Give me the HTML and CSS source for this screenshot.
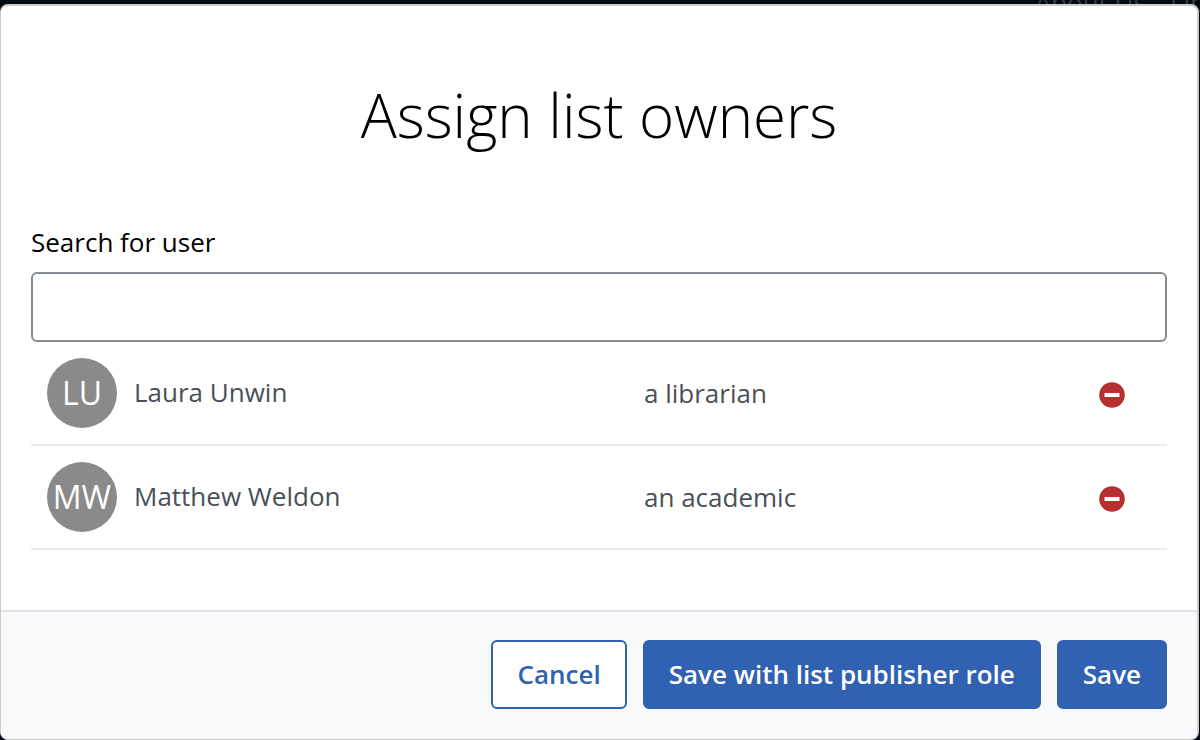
FILE: index.html
```html
<!DOCTYPE html>
<html lang="en">
<head>
  <meta charset="UTF-8" />
  <meta name="viewport" content="width=device-width, initial-scale=1.0"/>
  <title>Assign list owners</title>
  <link rel="stylesheet" href="styles.css">
</head>
<body>
  <nav class="site-nav">
    <a href="#">About Us</a>
    <a href="#">Lib</a>
  </nav>

  <div class="modal" role="dialog" aria-modal="true" aria-labelledby="modalTitle">
    <div class="modal-body">
      <h1 id="modalTitle">Assign list owners</h1>

      <label for="userSearch">Search for user</label>
      <input type="text" id="userSearch" class="search-input" />

      <ul class="owners">
        <li class="owner">
          <span class="avatar">LU</span>
          <span class="name">Laura Unwin</span>
          <span class="role">a librarian</span>
          <button type="button" class="remove" aria-label="Remove Laura Unwin">
            <svg viewBox="0 0 26 26" width="26" height="26" aria-hidden="true">
              <circle cx="13" cy="13" r="12.8" fill="#b53030" />
              <rect x="5.5" y="11" width="15" height="4" rx="0.5" fill="#fff" />
            </svg>
          </button>
        </li>
        <li class="owner">
          <span class="avatar">MW</span>
          <span class="name">Matthew Weldon</span>
          <span class="role">an academic</span>
          <button type="button" class="remove" aria-label="Remove Matthew Weldon">
            <svg viewBox="0 0 26 26" width="26" height="26" aria-hidden="true">
              <circle cx="13" cy="13" r="12.8" fill="#b53030" />
              <rect x="5.5" y="11" width="15" height="4" rx="0.5" fill="#fff" />
            </svg>
          </button>
        </li>
      </ul>
    </div>

    <div class="modal-footer">
      <button type="button" class="btn btn-outline">Cancel</button>
      <button type="button" class="btn">Save with list publisher role</button>
      <button type="button" class="btn">Save</button>
    </div>
  </div>
</body>
</html>
```

FILE: styles.css
```css
* {
  box-sizing: border-box;
}
body {
  font-family: "Open Sans", "Noto Sans", sans-serif;
  font-size: 26px;
  line-height: 36px;
  margin: 0;
  min-height: 100vh;
  background-color: #030a12;
  overflow: hidden;
}

/* page navigation, dimmed behind the dialog */
.site-nav {
  position: absolute;
  top: -16px;
  right: -6px;
  display: flex;
  gap: 24px;
  white-space: nowrap;
}
.site-nav a {
  color: #3a3c3e;
  text-decoration: none;
}

.modal {
  position: absolute;
  top: 4px;
  left: 0;
  right: 1px;
  bottom: 0;
  display: flex;
  flex-direction: column;
  background-color: #fff;
  border: solid #cccccc;
  border-width: 2px 2px 1px 1px;
  border-radius: 8px;
  overflow: hidden;
}
.modal-body {
  flex: 1;
  padding: 64px 30px 0;
}
h1 {
  font-size: 60px;
  font-weight: 300;
  line-height: 90px;
  text-align: center;
  color: #000;
  margin: 0 0 64px;
}
label {
  display: block;
  margin-bottom: 12px;
  color: #000;
}
.search-input {
  display: block;
  width: 100%;
  height: 70px;
  padding: 0 20px;
  font: inherit;
  border: 2px solid #868c96;
  border-radius: 6px;
  background-color: #fff;
}

.owners {
  list-style: none;
  margin: 0;
  padding: 0;
}
.owner {
  display: grid;
  grid-template-columns: 70px 1fr 1fr 26px;
  align-items: center;
  padding: 16px 42px 16px 16px;
  border-bottom: 2px solid #e9eaef;
  color: #495057;
}
.avatar {
  display: flex;
  align-items: center;
  justify-content: center;
  width: 70px;
  height: 70px;
  border-radius: 50%;
  background-color: #8a8a8a;
  color: #fff;
  font-size: 32px;
}
.name {
  padding-left: 17px;
  padding-bottom: 2px;
}
.role {
  padding-left: 36px;
}
.remove {
  display: flex;
  padding: 0;
  margin-top: 4px;
  border: none;
  background: none;
  cursor: pointer;
}

.modal-footer {
  display: flex;
  justify-content: flex-end;
  gap: 16px;
  padding: 28px 30px 30px;
  background-color: #f8f9fb;
  border-top: 2px solid #dee2e6;
}
.btn {
  padding: 14px 24px 15px;
  font-family: inherit;
  font-size: 26px;
  font-weight: 600;
  line-height: 36px;
  color: #fff;
  background-color: #3062b1;
  border: 2px solid #3062b1;
  border-radius: 6px;
  cursor: pointer;
}
.btn-outline {
  color: #3062b1;
  background-color: #fff;
}
```
